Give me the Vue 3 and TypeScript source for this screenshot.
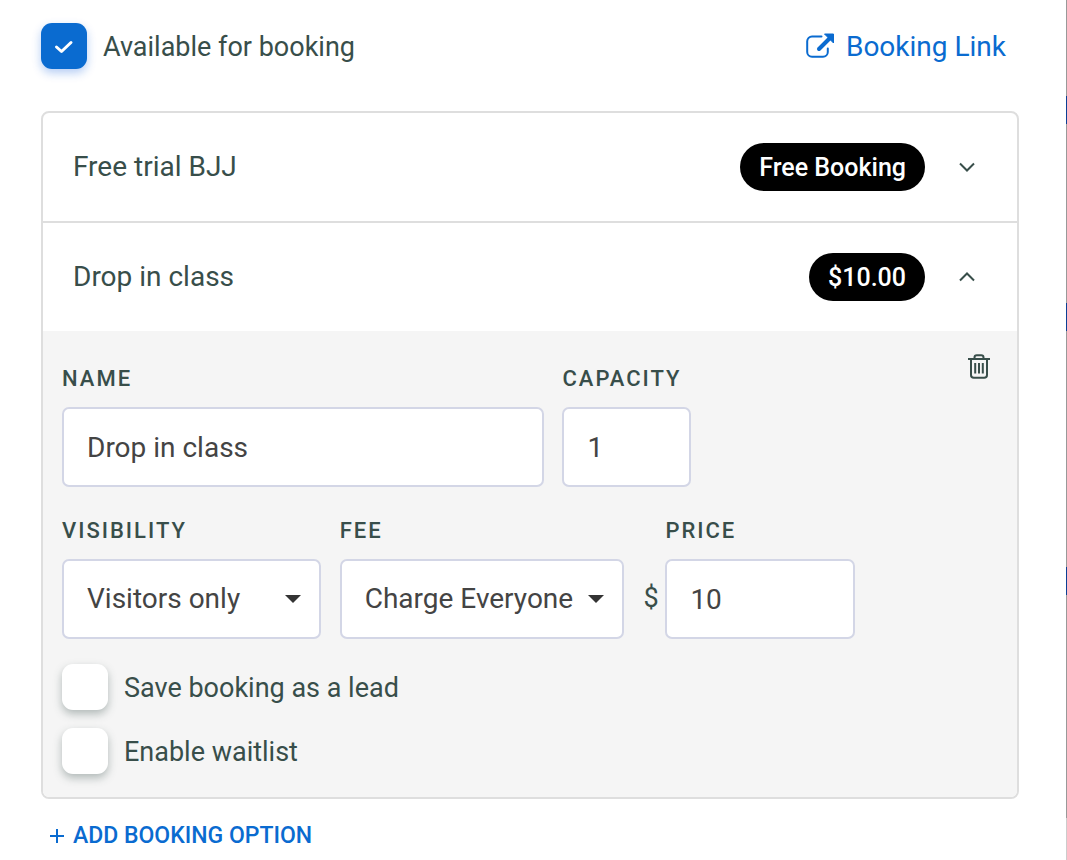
<script setup lang="ts">
import { ref } from 'vue'

interface BookingOption {
  id: number
  title: string
  badge: string
  open: boolean
}

const available = ref(true)
const options = ref<BookingOption[]>([
  { id: 1, title: 'Free trial BJJ', badge: 'Free Booking', open: false },
  { id: 2, title: 'Drop in class', badge: '$10.00', open: true },
])
const name = ref('Drop in class')
const capacity = ref('1')
const visibility = ref('Visitors only')
const fee = ref('Charge Everyone')
const price = ref('10')
const saveLead = ref(false)
const waitlist = ref(false)
</script>

<template>
  <div class="page">
    <main class="content">
      <header class="top">
        <label class="check">
          <input v-model="available" type="checkbox" />
          <svg v-if="available" class="tick" viewBox="0 0 46 46" aria-hidden="true">
            <path d="M15.500 24l5 4.500 9.500-9" />
          </svg>
          <span>Available for booking</span>
        </label>
        <a class="booking-link" href="#">
          <svg viewBox="0 0 28 26" aria-hidden="true">
            <path class="frame" d="M15.500 3.500H6A4.800 4.800 0 0 0 1.200 8.300V19A4.800 4.800 0 0 0 6 23.800H17A4.800 4.800 0 0 0 21.800 19V15.500" />
            <path class="shaft" d="M13 16L23.500 5.500" />
            <path class="head" d="M18.500 1H27.500V10Z" />
          </svg>
          <span>Booking Link</span>
        </a>
      </header>

      <section class="card">
        <article v-for="option in options" :key="option.id" class="option">
          <button class="row" type="button" :aria-expanded="option.open" @click="option.open = !option.open">
            <span class="title">{{ option.title }}</span>
            <span class="badge">{{ option.badge }}</span>
            <svg class="chevron" viewBox="0 0 16 10" aria-hidden="true">
              <path :d="option.open ? 'M1 8.500L8 1.500L15 8.500' : 'M1 1.500L8 8.500L15 1.500'" />
            </svg>
          </button>

          <form v-if="option.open && option.id === 2" class="panel" @submit.prevent>
            <div class="fields first">
              <div class="field">
                <label for="name">NAME</label>
                <input id="name" v-model="name" type="text" />
              </div>
              <div class="field">
                <label for="capacity">CAPACITY</label>
                <input id="capacity" v-model="capacity" type="text" />
              </div>
              <button class="delete" type="button" aria-label="Delete option">
                <svg viewBox="0 0 22 25" aria-hidden="true">
                  <path d="M0 5H22M6.500 5V3.500Q6.500 1.200 8.800 1.200H13.200Q15.500 1.200 15.500 3.500V5M3 5V21Q3 23.800 5.800 23.800H16.200Q19 23.800 19 21V5" />
                  <path d="M7.200 9V19.500M11 9V19.500M14.800 9V19.500" />
                </svg>
              </button>
            </div>

            <div class="fields second">
              <div class="field">
                <label for="visibility">VISIBILITY</label>
                <div class="select">
                  <select id="visibility" v-model="visibility">
                    <option>Visitors only</option>
                    <option>Everyone</option>
                  </select>
                  <svg viewBox="0 0 16 8" aria-hidden="true"><path d="M0 0H16L8 8Z" /></svg>
                </div>
              </div>
              <div class="field">
                <label for="fee">FEE</label>
                <div class="select">
                  <select id="fee" v-model="fee">
                    <option>Charge Everyone</option>
                    <option>Free</option>
                  </select>
                  <svg viewBox="0 0 16 8" aria-hidden="true"><path d="M0 0H16L8 8Z" /></svg>
                </div>
              </div>
              <div class="money">
                <span class="currency">$</span>
                <div class="field">
                  <label for="price">PRICE</label>
                  <input id="price" v-model="price" type="text" />
                </div>
              </div>
            </div>

            <div class="checks">
              <label class="check">
                <input v-model="saveLead" type="checkbox" />
                <span>Save booking as a lead</span>
              </label>
              <label class="check">
                <input v-model="waitlist" type="checkbox" />
                <span>Enable waitlist</span>
              </label>
            </div>
          </form>
        </article>
      </section>

      <button class="add" type="button">
        <svg viewBox="0 0 14 14" aria-hidden="true"><path d="M7 0V14M0 7H14" /></svg>
        <span>ADD BOOKING OPTION</span>
      </button>
    </main>
    <div class="edge" aria-hidden="true"></div>
  </div>
</template>

<style>
body {
  background: #fff;
}
</style>

<style scoped>
.page {
  display: flex;
  min-height: 100vh;
  box-sizing: border-box;
  font-family: Roboto, "Liberation Sans", sans-serif;
  font-size: 27px;
  line-height: 32px;
  color: #384e4a;
}
.page *,
.page *::before {
  box-sizing: border-box;
}
.content {
  flex: 1;
  min-width: 0;
  padding: 23px 47px 0 41px;
}
.edge {
  width: 1px;
  background: linear-gradient(
    #999 96px, #0b3f94 96px 124px,
    #999 124px 303px, #0b3f94 303px 331px,
    #999 331px 567px, #0b3f94 567px 595px,
    #999 595px 818px, #ccc 818px
  );
}
button {
  border: 0;
  background: none;
  padding: 0;
  font: inherit;
  color: inherit;
  cursor: pointer;
}
svg {
  display: block;
  fill: none;
}
.top {
  display: flex;
  align-items: center;
  justify-content: space-between;
  padding-right: 13px;
  margin-bottom: 42px;
}
.check {
  display: grid;
  grid-template-columns: 46px auto;
  column-gap: 16px;
  align-items: center;
  justify-content: start;
}
.check input {
  appearance: none;
  grid-area: 1 / 1;
  width: 46px;
  height: 46px;
  margin: 0;
  border-radius: 11px;
  background: #fff;
  box-shadow: 0 4px 9px rgba(52, 75, 71, 0.35);
}
.check input:checked {
  background: #0a6bd0;
  box-shadow: 0 4px 10px rgba(10, 90, 220, 0.3);
}
.check .tick {
  grid-area: 1 / 1;
  width: 46px;
  height: 46px;
  z-index: 1;
  pointer-events: none;
  stroke: #fff;
  stroke-width: 3;
  stroke-linecap: round;
  stroke-linejoin: round;
}
.check span {
  grid-area: 1 / 2;
  padding-top: 2px;
}
.booking-link {
  display: flex;
  align-items: center;
  gap: 12px;
  font-size: 28px;
  color: #0a6bd0;
  text-decoration: none;
}
.booking-link span {
  padding-top: 2px;
}
.booking-link svg {
  width: 28px;
  height: 26px;
}
.frame {
  stroke: currentColor;
  stroke-width: 2;
  stroke-linecap: round;
}
.shaft {
  stroke: currentColor;
  stroke-width: 4;
  stroke-linecap: round;
}
.head {
  fill: currentColor;
  stroke: currentColor;
  stroke-linejoin: round;
}
.card {
  border: 2px solid #dedede;
  border-radius: 8px;
  overflow: hidden;
}
.option + .option {
  border-top: 2px solid #dedede;
}
.row {
  display: flex;
  align-items: center;
  width: 100%;
  height: 108px;
  padding: 0 42px 0 30px;
  text-align: left;
}
.title {
  flex: 1;
  font-size: 28px;
}
.badge {
  padding: 9px 19px 7px;
  border-radius: 24px;
  background: #000;
  color: #fff;
  font-size: 25px;
  font-weight: 500;
}
.chevron {
  width: 16px;
  height: 10px;
  margin-left: 34px;
  stroke: currentColor;
  stroke-width: 2;
}
.panel {
  padding: 19px 19px 23px;
  background: #f5f5f5;
}
.fields {
  display: grid;
}
.first {
  grid-template-columns: 483fr 129fr 289fr;
  gap: 18px;
}
.second {
  grid-template-columns: 259fr 285fr 212fr 124fr;
  gap: 19px;
  margin-top: 15px;
}
.fields > .field,
.money > .field {
  padding-top: 13px;
}
.field {
  display: grid;
  gap: 12px;
  min-width: 0;
}
.field label {
  font-size: 22px;
  font-weight: 500;
  letter-spacing: 2px;
}
.field input,
.field select {
  appearance: none;
  width: 100%;
  height: 80px;
  min-width: 0;
  margin: 0;
  padding: 0 23px;
  border: 2px solid #d3d6e6;
  border-radius: 7px;
  background: #fff;
  color: #444;
  font: inherit;
  font-size: 28px;
}
.select {
  display: grid;
  align-items: center;
}
.field .select select {
  grid-area: 1 / 1;
  padding-right: 36px;
}
.select svg {
  grid-area: 1 / 1;
  justify-self: end;
  z-index: 1;
  width: 16px;
  height: 8px;
  margin-right: 20px;
  pointer-events: none;
  fill: #333;
}
.money {
  display: grid;
  grid-template-columns: 14px 1fr;
  gap: 8px;
}
.currency {
  align-self: end;
  padding-bottom: 25px;
  text-align: center;
}
.delete {
  justify-self: end;
  align-self: start;
  padding: 4px 8px;
}
.delete svg {
  width: 22px;
  height: 25px;
  stroke: currentColor;
  stroke-width: 2;
}
.checks {
  display: grid;
  gap: 18px;
  margin-top: 25px;
}
.add {
  display: flex;
  align-items: center;
  gap: 9px;
  margin: 21px 0 0 9px;
  color: #0a6bd0;
  font-size: 23px;
  font-weight: 500;
}
.add svg {
  width: 14px;
  height: 14px;
  stroke: currentColor;
  stroke-width: 2;
}
</style>
